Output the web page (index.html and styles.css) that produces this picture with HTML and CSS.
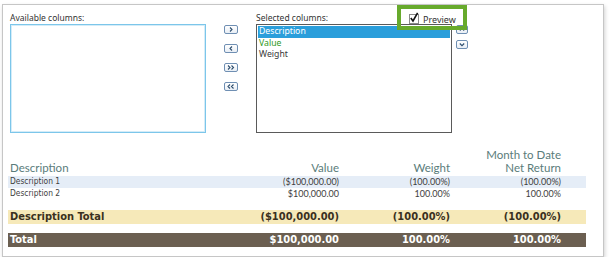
FILE: index.html
```html
<!DOCTYPE html>
<html>
<head>
<meta charset="utf-8">
<link rel="stylesheet" href="styles.css">
</head>
<body>
<div class="card">
  <div class="picker">
    <div class="col">
      <div class="lbl">Available columns:</div>
      <div class="list list-avail"></div>
    </div>
    <div class="movers">
      <span class="btn"><svg width="6" height="5" viewBox="0 0 6 5"><path d="M2 0.5 L4 2.5 L2 4.5" fill="none" stroke="#2e4e6e" stroke-width="1.1"/></svg></span>
      <span class="btn"><svg width="6" height="5" viewBox="0 0 6 5"><path d="M4 0.5 L2 2.5 L4 4.5" fill="none" stroke="#2e4e6e" stroke-width="1.1"/></svg></span>
      <span class="btn"><svg width="8" height="5" viewBox="0 0 8 5"><path d="M1 0.5 L3 2.5 L1 4.5 M4.5 0.5 L6.5 2.5 L4.5 4.5" fill="none" stroke="#2e4e6e" stroke-width="1.1"/></svg></span>
      <span class="btn"><svg width="8" height="5" viewBox="0 0 8 5"><path d="M3 0.5 L1 2.5 L3 4.5 M6.5 0.5 L4.5 2.5 L6.5 4.5" fill="none" stroke="#2e4e6e" stroke-width="1.1"/></svg></span>
    </div>
    <div class="col">
      <div class="lbl">Selected columns:</div>
      <div class="list list-sel">
        <div class="opt opt-on">Description</div>
        <div class="opt opt-green">Value</div>
        <div class="opt">Weight</div>
      </div>
    </div>
    <div class="updown">
      <span class="btn btn-sq"><svg width="6" height="5" viewBox="0 0 6 5"><path d="M0.8 3.5 L3 1.3 L5.2 3.5" fill="none" stroke="#2e4e6e" stroke-width="1.1"/></svg></span>
      <span class="btn btn-sq"><svg width="6" height="5" viewBox="0 0 6 5"><path d="M0.8 1.5 L3 3.7 L5.2 1.5" fill="none" stroke="#2e4e6e" stroke-width="1.1"/></svg></span>
    </div>
    <div class="preview">
      <span class="chk"><svg width="10" height="11" viewBox="0 0 10 11"><path d="M1.8 6 L4 9 L8.6 0.8" fill="none" stroke="#111" stroke-width="1.6"/></svg></span>
      <span>Preview</span>
    </div>
  </div>

  <div class="grid">
    <div class="row head">
      <div class="c desc">Description</div>
      <div class="c num">Value</div>
      <div class="c num">Weight</div>
      <div class="c num">Month to Date<br>Net Return</div>
      <div></div>
    </div>
    <div class="row line alt">
      <div class="c desc">Description 1</div>
      <div class="c num">($100,000.00)</div>
      <div class="c num">(100.00%)</div>
      <div class="c num">(100.00%)</div>
      <div></div>
    </div>
    <div class="row line">
      <div class="c desc">Description 2</div>
      <div class="c num">$100,000.00</div>
      <div class="c num">100.00%</div>
      <div class="c num">100.00%</div>
      <div></div>
    </div>
    <div class="row sub">
      <div class="c desc">Description Total</div>
      <div class="c num">($100,000.00)</div>
      <div class="c num">(100.00%)</div>
      <div class="c num">(100.00%)</div>
      <div></div>
    </div>
    <div class="row tot">
      <div class="c desc">Total</div>
      <div class="c num">$100,000.00</div>
      <div class="c num">100.00%</div>
      <div class="c num">100.00%</div>
      <div></div>
    </div>
  </div>
</div>
</body>
</html>
```

FILE: styles.css
```css
html, body {
  margin: 0;
  padding: 0;
  background: #ffffff;
}
.card {
  position: relative;
  box-sizing: border-box;
  width: 602px;
  height: 253px;
  margin: 4px 0 0 2px;
  border: 1px solid #c6c6c6;
  box-shadow: 1px 2px 4px rgba(0, 0, 0, 0.18);
  background: #fff;
}
.picker {
  display: flex;
  align-items: flex-start;
  padding: 7px 0 0 7px;
  height: 121px;
  box-sizing: border-box;
}
.col {
  display: flex;
  flex-direction: column;
}
.lbl {
  font-family: "Noto Sans", sans-serif;
  font-size: 8.5px;
  color: #333;
  height: 12px;
  line-height: 12px;
}
.list {
  width: 196px;
  height: 109px;
  box-sizing: border-box;
  background: #fff;
}
.list-avail {
  border: 1px solid #7cc6ea;
  box-shadow: inset 0 0 0 1px #d4ecf8;
}
.list-sel {
  border: 1px solid #5a5a5a;
  padding: 1px 1px;
}
.opt {
  font-family: "Noto Sans", sans-serif;
  font-size: 8.7px;
  line-height: 11.5px;
  height: 11.5px;
  color: #3a3a3a;
  padding-left: 1px;
}
.opt-on {
  background: #2a9edb;
  color: #fff;
}
.opt-green {
  color: #2f9a1c;
}
.movers {
  display: flex;
  flex-direction: column;
  gap: 10px;
  margin: 13px 18px 0 18px;
}
.btn {
  display: flex;
  align-items: center;
  justify-content: center;
  width: 14px;
  height: 9px;
  box-sizing: border-box;
  border: 1px solid #6f8fb3;
  border-radius: 2px;
  background: linear-gradient(#ffffff, #e8eef5);
}
.btn-sq {
  width: 12px;
}
.updown {
  display: flex;
  flex-direction: column;
  gap: 6px;
  margin: 13px 0 0 4px;
}
.preview {
  position: absolute;
  left: 394px;
  top: 0px;
  width: 70px;
  height: 25px;
  box-sizing: border-box;
  border: 4px solid #67aa2c;
  display: flex;
  align-items: center;
  gap: 4px;
  padding: 3px 0 0 8px;
  font-family: "Noto Sans", sans-serif;
  font-size: 9px;
  color: #333;
}
.chk {
  position: relative;
  display: block;
  width: 10px;
  height: 10px;
  box-sizing: border-box;
  border: 1px solid #8a8a8a;
  flex: none;
}
.chk svg {
  position: absolute;
  left: -1px;
  top: -3px;
}
.grid {
  margin: 22px 0 0 5px;
  width: 578px;
}
.row {
  display: grid;
  grid-template-columns: 220px 111px 111px 111px 25px;
  align-items: end;
}
.c.desc {
  padding-left: 2px;
}
.num {
  text-align: right;
}
.head {
  font-family: "Lato", sans-serif;
  font-size: 11.5px;
  color: #5a7c7a;
  line-height: 13px;
  padding-bottom: 2px;
}
.line {
  font-family: "DejaVu Sans Condensed", "DejaVu Sans", sans-serif;
  font-size: 8.4px;
  color: #3e3e3e;
  height: 11.5px;
  line-height: 11.5px;
}
.line .num {
  font-family: "Lato", sans-serif;
  font-size: 9px;
}
.alt {
  background: #e5edf7;
}
.sub {
  margin-top: 11px;
  height: 14px;
  line-height: 14px;
  background: #f6e9b9;
  font-family: "DejaVu Sans Condensed", "DejaVu Sans", sans-serif;
  font-weight: bold;
  font-size: 11px;
  color: #3a3020;
}
.tot {
  margin-top: 9px;
  height: 14px;
  line-height: 14px;
  background: #6b5f51;
  font-family: "DejaVu Sans Condensed", "DejaVu Sans", sans-serif;
  font-weight: bold;
  font-size: 11px;
  color: #fff;
}
```
